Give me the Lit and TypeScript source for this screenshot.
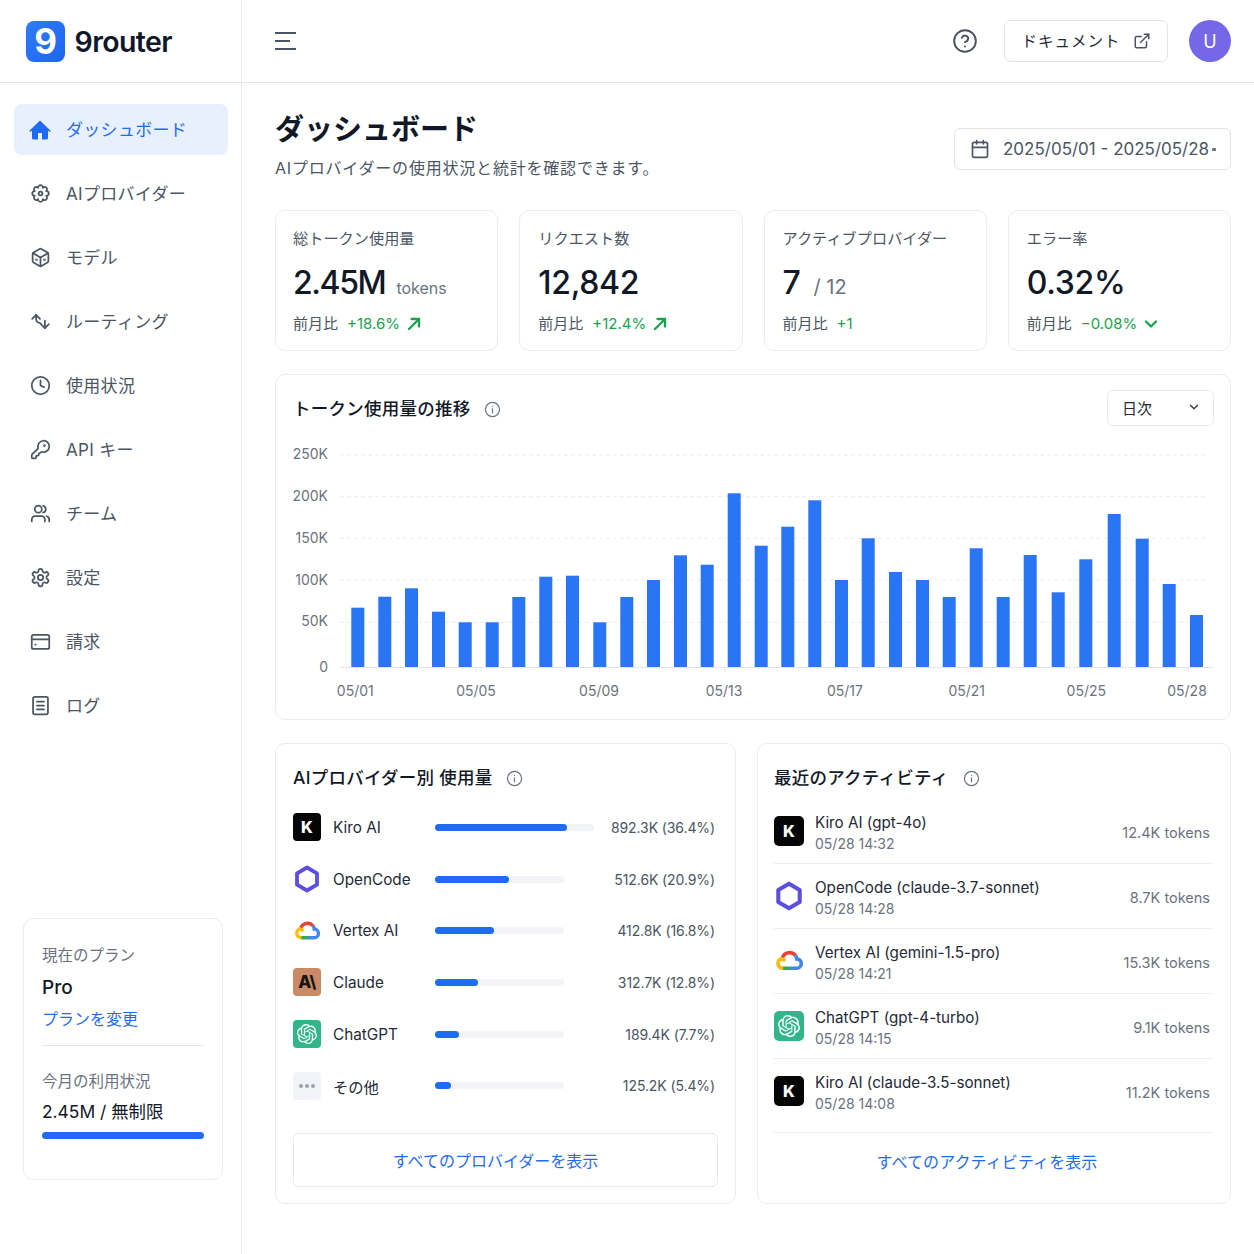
import { LitElement, html, css, svg } from "lit";
import { customElement } from "lit/decorators.js";

// scalloped outline for the provider flower icon
const lobes = Array.from({ length: 8 }, (_, i) => {
  const a = (i * Math.PI) / 4 - Math.PI / 8;
  return `${(12 + 7 * Math.cos(a)).toFixed(2)} ${(12 + 7 * Math.sin(a)).toFixed(2)}`;
});
const flowerPath = `M${lobes[0]}` + lobes.slice(1).concat(lobes[0]).map((p) => `A2.7 2.7 0 1 1 ${p}`).join("") + "Z";

const icons: Record<string, unknown> = {
  home: svg`<path fill="currentColor" stroke="none" d="M12 2.6 1.6 12.4a.9.9 0 0 0 1.2 1.3L4 12.6V20a1.6 1.6 0 0 0 1.6 1.6H10V15h4v6.6h4.4A1.6 1.6 0 0 0 20 20v-7.4l1.2 1.1a.9.9 0 0 0 1.2-1.3Z"/>`,
  flower: svg`<path d=${flowerPath}/><circle cx="12" cy="12" r="2.2"/>`,
  box: svg`<path d="M21 8a2 2 0 0 0-1-1.73l-7-4a2 2 0 0 0-2 0l-7 4A2 2 0 0 0 3 8v8a2 2 0 0 0 1 1.73l7 4a2 2 0 0 0 2 0l7-4A2 2 0 0 0 21 16Z"/><path d="m3.3 7 8.7 5 8.7-5"/><path d="M12 22V12"/><circle cx="7.500" cy="14.500" r=".5"/><circle cx="16.500" cy="14.500" r=".5"/>`,
  route: svg`<path d="m2.500 9 4.500-4.500L11.500 9"/><path d="M7 4.500V10c0 1.600 1 2.600 2.600 3.200l2.400 1"/><path d="m12.500 15 4.500 4.500 4.500-4.500"/><path d="M17 19.500V11"/>`,
  clock: svg`<circle cx="12" cy="12" r="10"/><path d="M12 6v6l4 2"/>`,
  key: svg`<path d="M2.586 17.414A2 2 0 0 0 2 18.828V21a1 1 0 0 0 1 1h3a1 1 0 0 0 1-1v-1a1 1 0 0 1 1-1h1a1 1 0 0 0 1-1v-1a1 1 0 0 1 1-1h.172a2 2 0 0 0 1.414-.586l.814-.814a6.5 6.5 0 1 0-4-4z"/><circle cx="16.500" cy="7.500" r=".5" fill="currentColor"/>`,
  users: svg`<path d="M17 21v-2a4 4 0 0 0-4-4H6a4 4 0 0 0-4 4v2"/><circle cx="9.500" cy="7" r="4"/><path d="M22 21v-2a4 4 0 0 0-3-3.870"/><path d="M15 3.130a4 4 0 0 1 0 7.750"/>`,
  gear: svg`<path d="M12.220 2h-.44a2 2 0 0 0-2 2v.18a2 2 0 0 1-1 1.730l-.43.25a2 2 0 0 1-2 0l-.15-.08a2 2 0 0 0-2.730.730l-.22.38a2 2 0 0 0 .73 2.730l.15.1a2 2 0 0 1 1 1.720v.51a2 2 0 0 1-1 1.740l-.15.09a2 2 0 0 0-.73 2.730l.22.38a2 2 0 0 0 2.730.730l.15-.08a2 2 0 0 1 2 0l.43.25a2 2 0 0 1 1 1.730V20a2 2 0 0 0 2 2h.44a2 2 0 0 0 2-2v-.18a2 2 0 0 1 1-1.730l.43-.25a2 2 0 0 1 2 0l.15.08a2 2 0 0 0 2.730-.730l.22-.39a2 2 0 0 0-.73-2.730l-.15-.08a2 2 0 0 1-1-1.740v-.5a2 2 0 0 1 1-1.740l.15-.09a2 2 0 0 0 .73-2.730l-.22-.38a2 2 0 0 0-2.730-.730l-.15.08a2 2 0 0 1-2 0l-.43-.25a2 2 0 0 1-1-1.730V4a2 2 0 0 0-2-2z"/><circle cx="12" cy="12" r="3"/>`,
  card: svg`<rect x="2" y="4.500" width="20" height="16" rx="2"/><path d="M2 9.500h20"/><path d="M6 15.500h.5"/>`,
  log: svg`<rect x="3.500" y="2" width="17" height="20" rx="2"/><path d="M8 7.500h8M8 12h8M8 16.500h8"/>`,
  help: svg`<circle cx="12" cy="12" r="10"/><path d="M9.090 9a3 3 0 0 1 5.830 1c0 2-3 3-3 3"/><path d="M12 17h.01"/>`,
  external: svg`<path d="M15 3h6v6"/><path d="M10 14 21 3"/><path d="M18 13v6a2 2 0 0 1-2 2H5a2 2 0 0 1-2-2V8a2 2 0 0 1 2-2h6"/>`,
  calendar: svg`<rect x="3" y="4" width="18" height="18" rx="2"/><path d="M16 2v4M8 2v4M3 10h18"/>`,
  chevron: svg`<path d="m6 9 6 6 6-6"/>`,
  info: svg`<circle cx="12" cy="12" r="10"/><path d="M12 16.500V11"/><path d="M12 7.500h.01"/>`,
  up: svg`<path d="M6 18 18 6"/><path d="M9 6h9v9"/>`,
};

const icon = (name: string) =>
  html`<svg class="ic" viewBox="0 0 24 24" fill="none" stroke="currentColor" stroke-linecap="round" stroke-linejoin="round">${icons[name]}</svg>`;

const openaiPath =
  "M22.2819 9.8211a5.9847 5.9847 0 0 0-.5157-4.9108 6.0462 6.0462 0 0 0-6.5098-2.9A6.0651 6.0651 0 0 0 4.9807 4.1818a5.9847 5.9847 0 0 0-3.9977 2.9 6.0462 6.0462 0 0 0 .7427 7.0966 5.98 5.98 0 0 0 .511 4.9107 6.051 6.051 0 0 0 6.5146 2.9001A5.9847 5.9847 0 0 0 13.2599 24a6.0557 6.0557 0 0 0 5.7718-4.2058 5.9894 5.9894 0 0 0 3.9977-2.9001 6.0557 6.0557 0 0 0-.7475-7.0729zm-9.022 12.6081a4.4755 4.4755 0 0 1-2.8764-1.0408l.1419-.0804 4.7783-2.7582a.7948.7948 0 0 0 .3927-.6813v-6.7369l2.02 1.1686a.071.071 0 0 1 .038.052v5.5826a4.504 4.504 0 0 1-4.4945 4.4944zm-9.6607-4.1254a4.4708 4.4708 0 0 1-.5346-3.0137l.142.0852 4.783 2.7582a.7712.7712 0 0 0 .7806 0l5.8428-3.3685v2.3324a.0804.0804 0 0 1-.0332.0615L9.74 19.9502a4.4992 4.4992 0 0 1-6.1408-1.6464zM2.3408 7.8956a4.485 4.485 0 0 1 2.3655-1.9728V11.6a.7664.7664 0 0 0 .3879.6765l5.8144 3.3543-2.0201 1.1685a.0757.0757 0 0 1-.071 0l-4.8303-2.7865A4.504 4.504 0 0 1 2.3408 7.872zm16.5963 3.8558L13.1038 8.364 15.1192 7.2a.0757.0757 0 0 1 .071 0l4.8303 2.7913a4.4944 4.4944 0 0 1-.6765 8.1042v-5.6772a.79.79 0 0 0-.407-.667zm2.0107-3.0231l-.142-.0852-4.7735-2.7818a.7759.7759 0 0 0-.7854 0L9.409 9.2297V6.8974a.0662.0662 0 0 1 .0284-.0615l4.8303-2.7866a4.4992 4.4992 0 0 1 6.6802 4.66zM8.3065 12.863l-2.02-1.1638a.0804.0804 0 0 1-.038-.0567V6.0742a4.4992 4.4992 0 0 1 7.3757-3.4537l-.142.0805L8.704 5.459a.7948.7948 0 0 0-.3927.6813zm1.0976-2.3654l2.602-1.4998 2.6069 1.4998v2.9994l-2.5974 1.4997-2.6067-1.4997Z";

function logo(kind: string) {
  switch (kind) {
    case "kiro":
      return html`<span class="logo kiro">K</span>`;
    case "opencode":
      return html`<span class="logo"><svg viewBox="0 0 28 28"><polygon points="14,2.500 24,8.300 24,19.700 14,25.500 4,19.700 4,8.300" fill="none" stroke="#5b4ee0" stroke-width="3.800" stroke-linejoin="round"/></svg></span>`;
    case "vertex":
      return html`<span class="logo"><svg viewBox="0 0 28 28" fill="none" stroke-width="3.400">
        <path d="M7.600 13A7 7 0 0 1 20 8.800" stroke="#ea4335"/>
        <path d="M20 8.800q1.100 1.500 1.200 3.200a4.400 4.400 0 0 1-.2 8.800h-6" stroke="#4285f4"/>
        <path d="M15 20.800H8" stroke="#34a853"/>
        <path d="M8.500 20.800a4.600 4.600 0 0 1-1.500-9l3.500 2" stroke="#fbbc05"/>
      </svg></span>`;
    case "claude":
      return html`<span class="logo claude">A\\</span>`;
    case "gpt":
      return html`<span class="logo gpt"><svg viewBox="0 0 24 24"><path fill="#fff" d="${openaiPath}"/></svg></span>`;
    default:
      return html`<span class="logo other"><i></i><i></i><i></i></span>`;
  }
}

const nav = [
  ["home", "ダッシュボード"],
  ["flower", "AIプロバイダー"],
  ["box", "モデル"],
  ["route", "ルーティング"],
  ["clock", "使用状況"],
  ["key", "API キー"],
  ["users", "チーム"],
  ["gear", "設定"],
  ["card", "請求"],
  ["log", "ログ"],
];

const stats = [
  { label: "総トークン使用量", value: "2.45M", unit: "tokens", delta: "+18.6%", arrow: "up" },
  { label: "リクエスト数", value: "12,842", unit: "", delta: "+12.4%", arrow: "up" },
  { label: "アクティブプロバイダー", value: "7", unit: "/ 12", delta: "+1", arrow: "" },
  { label: "エラー率", value: "0.32%", unit: "", delta: "−0.08%", arrow: "chevron" },
];

// left edge, top edge of every bar, in page pixels
const bars = [
  [351.3, 607.7], [378.3, 596.7], [405, 588.3], [432, 611.7], [458.7, 622.3], [485.7, 622.3], [512.3, 597], [539.3, 576.7],
  [566, 575.7], [593.3, 622.3], [620.3, 597], [647, 580], [674, 555.3], [700.7, 564.7], [727.7, 493.3], [754.7, 545.7],
  [781.3, 526.7], [808.3, 500.3], [835, 580], [861.7, 538.3], [889, 572], [916, 580], [942.7, 597], [969.7, 548.3],
  [996.7, 597], [1023.7, 555], [1051.7, 592.3], [1079.3, 559.3], [1107.7, 514], [1135.7, 538.7], [1162.7, 584], [1190, 615],
];
const yTicks: [string, number, number][] = [
  ["250K", 453.3, 455], ["200K", 495, 496.7], ["150K", 536.7, 538.3], ["100K", 578.7, 580], ["50K", 620.3, 622.3],
];
const xTicks: [string, number, number][] = [
  ["05/01", 355.3, 356.7], ["05/05", 476, 476], ["05/09", 599, 599.3], ["05/13", 724, 725],
  ["05/17", 845, 845.6], ["05/21", 966.7, 968], ["05/25", 1086.3, 1086], ["05/28", 1187, 1188],
];

const providers = [
  { kind: "kiro", name: "Kiro AI", track: 159, fill: 132, value: "892.3K (36.4%)" },
  { kind: "opencode", name: "OpenCode", track: 129, fill: 74, value: "512.6K (20.9%)" },
  { kind: "vertex", name: "Vertex AI", track: 129, fill: 59, value: "412.8K (16.8%)" },
  { kind: "claude", name: "Claude", track: 129, fill: 43, value: "312.7K (12.8%)" },
  { kind: "gpt", name: "ChatGPT", track: 129, fill: 24, value: "189.4K (7.7%)" },
  { kind: "other", name: "その他", track: 129, fill: 16, value: "125.2K (5.4%)" },
];

const activity = [
  { kind: "kiro", name: "Kiro AI (gpt-4o)", time: "05/28 14:32", tokens: "12.4K tokens" },
  { kind: "opencode", name: "OpenCode (claude-3.7-sonnet)", time: "05/28 14:28", tokens: "8.7K tokens" },
  { kind: "vertex", name: "Vertex AI (gemini-1.5-pro)", time: "05/28 14:21", tokens: "15.3K tokens" },
  { kind: "gpt", name: "ChatGPT (gpt-4-turbo)", time: "05/28 14:15", tokens: "9.1K tokens" },
  { kind: "kiro", name: "Kiro AI (claude-3.5-sonnet)", time: "05/28 14:08", tokens: "11.2K tokens" },
];

@customElement("app-root")
export class AppRoot extends LitElement {
  static styles = css`
    :host {
      display: block;
      width: 1254px;
      height: 1254px;
      overflow: hidden;
      background: #fff;
      color: #111827;
      font-family: Inter, "Noto Sans CJK JP", sans-serif;
    }
    * {
      box-sizing: border-box;
    }
    .shell {
      display: grid;
      grid-template-columns: 242px 1fr;
      height: 1254px;
    }
    .ic {
      display: block;
      width: 24px;
      height: 24px;
      stroke-width: 2;
      flex: none;
    }

    /* sidebar */
    .side {
      display: flex;
      flex-direction: column;
      border-right: 1px solid #e7eaf0;
    }
    .brand {
      height: 83px;
      flex: none;
      display: flex;
      align-items: center;
      gap: 9.500px;
      padding-left: 26px;
      border-bottom: 1px solid #e2e6ec;
      font-size: 28.500px;
      font-weight: 600;
      letter-spacing: -0.6px;
      color: #0f172a;
    }
    .mark {
      width: 39px;
      height: 41px;
      border-radius: 8px;
      background: linear-gradient(135deg, #2f7bf8, #1c66ef);
      color: #fff;
      display: flex;
      align-items: center;
      justify-content: center;
      font-size: 35px;
      font-weight: 700;
      letter-spacing: 0;
    }
    .nav {
      display: flex;
      flex-direction: column;
      gap: 13px;
      padding: 21px 13px 0 14px;
    }
    .nav a {
      height: 51px;
      display: flex;
      align-items: center;
      gap: 15.500px;
      padding: 0 0 2px 15.500px;
      border-radius: 8px;
      color: #4b5563;
      font-size: 17px;
      letter-spacing: 0.3px;
    }
    .nav a .ic {
      width: 21px;
      height: 21px;
      stroke-width: 2;
      margin-top: 2px;
    }
    .nav a.on {
      background: #e8f0fe;
      color: #1f6bf3;
    }
    .nav a.on .ic {
      width: 24px;
      height: 24px;
      margin: 2px -1.500px 0;
    }
    .plan {
      margin: auto 0 74px 23px;
      width: 200px;
      height: 262px;
      flex: none;
      border: 1.500px solid #eaecf1;
      border-radius: 10px;
      padding: 26px 18px 0;
    }
    .plan .lbl {
      font-size: 15.500px;
      line-height: 22px;
      color: #6b7280;
    }
    .plan .tier {
      margin-top: 7px;
      font-size: 19px;
      line-height: 28px;
      font-weight: 500;
    }
    .plan .link {
      margin-top: 6px;
      font-size: 16px;
      line-height: 22px;
      color: #1f6bf3;
    }
    .plan hr {
      margin: 15px 0 25px;
      border: 0;
      border-top: 1px solid #e2e6ec;
    }
    .plan .used {
      margin-top: 7px;
      font-size: 17.400px;
      line-height: 24px;
      white-space: nowrap;
    }
    .plan .meter {
      margin-top: 8px;
      height: 6.500px;
      border-radius: 4px;
      background: #1f6bf3;
    }

    /* top bar */
    .top {
      height: 83px;
      display: flex;
      align-items: center;
      padding: 0 23px 0 33px;
      border-bottom: 1px solid #e2e6ec;
      color: #4b5563;
    }
    .burger {
      display: flex;
      flex-direction: column;
      gap: 6px;
      width: 21px;
    }
    .burger i {
      display: block;
      height: 2px;
      background: #4b5563;
    }
    .burger i:nth-child(2) {
      width: 15px;
    }
    .top .help {
      margin-left: auto;
    }
    .top .help .ic {
      width: 26px;
      height: 26px;
      stroke-width: 1.800;
    }
    .docs {
      margin-left: 26px;
      width: 164px;
      height: 42px;
      border: 1.500px solid #dfe3ea;
      border-radius: 7px;
      display: flex;
      align-items: center;
      justify-content: center;
      gap: 12px;
      padding-bottom: 2px;
      font-size: 15.500px;
      letter-spacing: 1px;
      color: #1f2937;
    }
    .docs .ic {
      width: 18px;
      height: 18px;
      margin-top: 2px;
      color: #4b5563;
    }
    .avatar {
      margin-left: 21px;
      width: 42px;
      height: 42px;
      border-radius: 50%;
      background: #7568e8;
      color: #fff;
      display: flex;
      align-items: center;
      justify-content: center;
      font-size: 18px;
    }

    /* content */
    .content {
      padding: 27px 23px 0 33px;
      display: flex;
      flex-direction: column;
      gap: 23px;
    }
    .head {
      display: flex;
      justify-content: space-between;
      align-items: flex-start;
      margin-bottom: 7px;
    }
    h1 {
      margin: 2px 0 0;
      font-size: 29px;
      line-height: 36px;
      font-weight: 700;
      color: #111827;
    }
    .sub {
      margin-top: 8px;
      font-size: 16px;
      line-height: 24px;
      letter-spacing: 0.8px;
      color: #4b5563;
    }
    .range {
      margin-top: 18px;
      width: 277px;
      height: 42px;
      display: flex;
      align-items: center;
      gap: 13px;
      padding-left: 15px;
      border: 1.500px solid #dfe3ea;
      border-radius: 6px;
      font-size: 17px;
      color: #4b5563;
      white-space: nowrap;
      position: relative;
    }
    .range .ic {
      width: 20px;
      height: 20px;
    }
    .range b {
      position: absolute;
      right: 14px;
      top: 19px;
      width: 4px;
      height: 3px;
      background: #6b7280;
      border-radius: 1px;
    }
    .panel {
      border: 1.500px solid #eaecf1;
      border-radius: 10px;
      background: #fff;
    }
    .stats {
      display: grid;
      grid-template-columns: repeat(4, 1fr);
      gap: 21px;
    }
    .stat {
      height: 141px;
      padding: 17px 18px 0;
    }
    .stat:first-child {
      padding-left: 17px;
    }
    .stat .lbl {
      font-size: 15.200px;
      line-height: 22px;
      color: #4b5563;
      white-space: nowrap;
    }
    .stat .val {
      margin-top: 13px;
      height: 40px;
      display: flex;
      align-items: baseline;
      gap: 11px;
      font-size: 32px;
      line-height: 40px;
      font-weight: 500;
      letter-spacing: -0.3px;
      color: #111827;
    }
    .stat .val.tight {
      letter-spacing: -1.400px;
    }
    .stat .val span {
      font-size: 16px;
      font-weight: 400;
      letter-spacing: 0;
      color: #6b7280;
    }
    .stat .val span.big {
      margin-left: 2px;
      font-size: 20px;
    }
    .stat .chg {
      margin-top: 10px;
      display: flex;
      align-items: center;
      gap: 9px;
      font-size: 15px;
      line-height: 22px;
      color: #4b5563;
    }
    .stat .chg em {
      font-style: normal;
      font-weight: 400;
      color: #16a34a;
    }
    .stat .chg .ic {
      width: 20px;
      height: 20px;
      stroke-width: 2.800;
      margin-left: -5px;
      color: #16a34a;
    }

    .chart {
      height: 346px;
    }
    .chart-head {
      height: 60.500px;
      display: flex;
      align-items: flex-start;
      justify-content: space-between;
      padding: 15px 16px 0 17px;
    }
    .title {
      display: flex;
      align-items: center;
      gap: 14px;
      font-size: 17.500px;
      letter-spacing: 0.25px;
      line-height: 24px;
      font-weight: 500;
      color: #111827;
      white-space: nowrap;
    }
    .title .ic {
      width: 17px;
      height: 17px;
      stroke-width: 1.700;
      color: #6b7280;
    }
    .chart-head .title {
      margin-top: 7px;
      gap: 13px;
    }
    .select {
      width: 107px;
      height: 36px;
      display: flex;
      align-items: center;
      justify-content: space-between;
      padding: 0 12px 2px 14px;
      border: 1.500px solid #e6e9ef;
      border-radius: 6px;
      font-size: 15px;
      color: #1f2937;
    }
    .select .ic {
      width: 14px;
      height: 14px;
      stroke-width: 2.500;
      color: #374151;
    }
    .plot {
      display: block;
      width: 953px;
      height: 283px;
      font-family: Inter, sans-serif;
    }
    .plot text {
      font-size: 14px;
      fill: #6b7280;
    }

    .bottom {
      display: grid;
      grid-template-columns: 461px 1fr;
      gap: 21px;
    }
    .list {
      height: 461px;
      padding: 22px 17px 0 17px;
    }
    .list.act {
      padding-left: 16px;
    }
    .logo {
      width: 28px;
      height: 28px;
      flex: none;
      border-radius: 4px;
      display: flex;
      align-items: center;
      justify-content: center;
      overflow: hidden;
    }
    .logo svg {
      display: block;
      width: 100%;
      height: 100%;
    }
    .logo.kiro {
      background: #050505;
      color: #fff;
      font-size: 16px;
      font-weight: 800;
    }
    .logo.claude {
      background: #c98a65;
      color: #1a1412;
      font-size: 17px;
      font-weight: 800;
      letter-spacing: -0.5px;
    }
    .logo.gpt {
      background: #33b58a;
      padding: 4px;
    }
    .logo.other {
      background: #f1f3f6;
      gap: 2px;
    }
    .logo.other i {
      width: 4px;
      height: 4px;
      border-radius: 50%;
      background: #9ca3af;
    }
    .rows {
      margin-top: 11.500px;
    }
    .prow {
      height: 51.700px;
      display: flex;
      align-items: center;
      padding-right: 3px;
      font-size: 15.300px;
      color: #374151;
    }
    .prow .nm {
      width: 102px;
      margin-left: 12px;
      flex: none;
      color: #1f2937;
    }
    .track {
      height: 7px;
      border-radius: 4px;
      background: #f1f3f6;
    }
    .track div {
      height: 7px;
      border-radius: 4px;
      background: #1f6bf3;
    }
    .prow .amt {
      margin-left: auto;
      font-size: 14px;
      letter-spacing: -0.1px;
      color: #4b5563;
      white-space: nowrap;
    }
    .all {
      margin-top: 21px;
      height: 54px;
      display: flex;
      align-items: center;
      justify-content: center;
      padding-right: 20px;
      border: 1.500px solid #e6e9ef;
      border-radius: 6px;
      font-size: 16px;
      color: #1f6bf3;
    }
    .acts {
      margin-top: 9px;
    }
    .arow {
      height: 65px;
      display: flex;
      align-items: center;
      gap: 11px;
      border-bottom: 1.500px solid #eceef3;
    }
    .arow:last-child {
      height: 74px;
      padding-bottom: 9px;
    }
    .arow .logo {
      width: 30px;
      height: 30px;
      border-radius: 5px;
    }
    .arow .txt {
      margin-top: 3px;
    }
    .arow .who {
      font-size: 15.200px;
      line-height: 21px;
      color: #1f2937;
    }
    .arow .when {
      font-size: 14px;
      line-height: 21px;
      color: #6b7280;
    }
    .arow .tok {
      margin: 2px 0 0 auto;
      padding-right: 3px;
      font-size: 14.500px;
      color: #6b7280;
    }
    .more {
      margin-top: 11px;
      height: 34px;
      display: flex;
      align-items: center;
      justify-content: center;
      padding-right: 13px;
      font-size: 16px;
      letter-spacing: 0.1px;
      color: #1f6bf3;
    }
  `;

  renderPlot() {
    return html`<svg class="plot" viewBox="276 436 953 283">
      ${yTicks.map(
        ([, , y]) => svg`<line x1="340" x2="1207" y1=${y} y2=${y} stroke="#e8ebf1" stroke-dasharray="4 3"/>`
      )}
      ${bars.map(([x, top]) => svg`<rect x=${x} y=${top} width="13" height=${667 - top} fill="#2a74f6"/>`)}
      <line x1="340" x2="1213" y1="667.500" y2="667.500" stroke="#e2e6ec"/>
      ${yTicks.map(([t, y]) => svg`<text x="328" y=${y + 6} text-anchor="end">${t}</text>`)}
      <text x="328" y="672" text-anchor="end">0</text>
      ${xTicks.map(
        ([t, x, tick]) => svg`
          <line x1=${tick} x2=${tick} y1="668" y2="672" stroke="#e2e6ec"/>
          <text x=${x} y="696" text-anchor="middle">${t}</text>`
      )}
    </svg>`;
  }

  render() {
    return html`
      <div class="shell">
        <aside class="side">
          <div class="brand"><span class="mark">9</span>9router</div>
          <nav class="nav">
            ${nav.map(
              ([ic, label], i) => html`<a class=${i === 0 ? "on" : ""}>${icon(ic)}<span>${label}</span></a>`
            )}
          </nav>
          <div class="plan">
            <div class="lbl">現在のプラン</div>
            <div class="tier">Pro</div>
            <div class="link">プランを変更</div>
            <hr />
            <div class="lbl">今月の利用状況</div>
            <div class="used">2.45M / 無制限</div>
            <div class="meter"></div>
          </div>
        </aside>
        <main>
          <header class="top">
            <div class="burger"><i></i><i></i><i></i></div>
            <div class="help">${icon("help")}</div>
            <div class="docs">ドキュメント ${icon("external")}</div>
            <div class="avatar">U</div>
          </header>
          <div class="content">
            <div class="head">
              <div>
                <h1>ダッシュボード</h1>
                <div class="sub">AIプロバイダーの使用状況と統計を確認できます。</div>
              </div>
              <div class="range">${icon("calendar")}2025/05/01 - 2025/05/28<b></b></div>
            </div>
            <section class="stats">
              ${stats.map(
                (s) => html`<div class="panel stat">
                  <div class="lbl">${s.label}</div>
                  <div class="val ${s.value.endsWith("M") ? "tight" : ""}">
                    ${s.value}${s.unit ? html`<span class=${s.unit === "tokens" ? "" : "big"}>${s.unit}</span>` : ""}
                  </div>
                  <div class="chg">前月比 <em>${s.delta}</em>${s.arrow ? icon(s.arrow) : ""}</div>
                </div>`
              )}
            </section>
            <section class="panel chart">
              <div class="chart-head">
                <div class="title">トークン使用量の推移 ${icon("info")}</div>
                <div class="select">日次 ${icon("chevron")}</div>
              </div>
              ${this.renderPlot()}
            </section>
            <section class="bottom">
              <div class="panel list">
                <div class="title">AIプロバイダー別 使用量 ${icon("info")}</div>
                <div class="rows">
                  ${providers.map(
                    (p) => html`<div class="prow">
                      ${logo(p.kind)}
                      <span class="nm">${p.name}</span>
                      <div class="track" style="width:${p.track}px"><div style="width:${p.fill}px"></div></div>
                      <span class="amt">${p.value}</span>
                    </div>`
                  )}
                </div>
                <div class="all">すべてのプロバイダーを表示</div>
              </div>
              <div class="panel list act">
                <div class="title">最近のアクティビティ ${icon("info")}</div>
                <div class="acts">
                  ${activity.map(
                    (a) => html`<div class="arow">
                      ${logo(a.kind)}
                      <div class="txt">
                        <div class="who">${a.name}</div>
                        <div class="when">${a.time}</div>
                      </div>
                      <span class="tok">${a.tokens}</span>
                    </div>`
                  )}
                </div>
                <div class="more">すべてのアクティビティを表示</div>
              </div>
            </section>
          </div>
        </main>
      </div>
    `;
  }
}
